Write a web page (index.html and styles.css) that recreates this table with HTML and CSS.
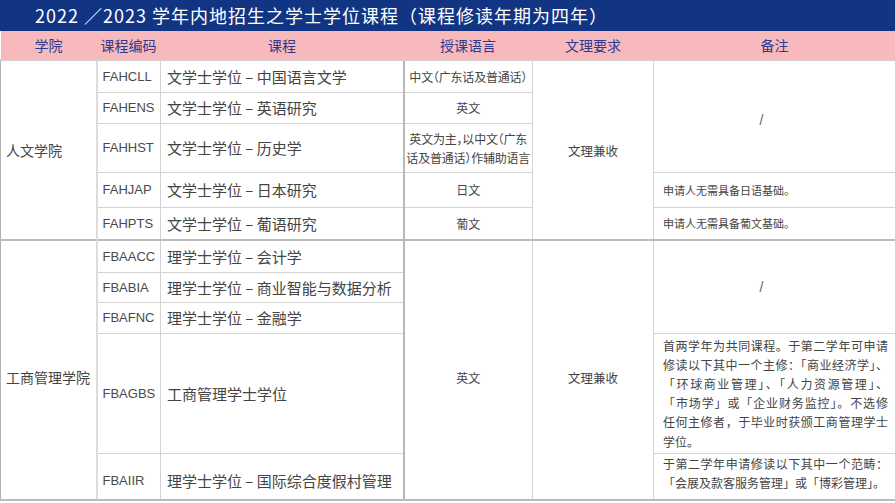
FILE: index.html
```html
<!DOCTYPE html>
<html lang="zh-CN">
<head>
<meta charset="utf-8">
<title>2022／2023 学年内地招生之学士学位课程</title>
<link rel="stylesheet" href="styles.css">
</head>
<body>
<div class="title">2022 ／2023 学年内地招生之学士学位课程（课程修读年期为四年）</div>
<table class="courses">
  <colgroup>
    <col class="c1"><col class="c2"><col class="c3"><col class="c4"><col class="c5"><col class="c6">
  </colgroup>
  <thead>
    <tr><th>学院</th><th>课程编码</th><th>课程</th><th>授课语言</th><th>文理要求</th><th>备注</th></tr>
  </thead>
  <tbody class="fah">
    <tr class="r1">
      <td rowspan="5" class="school">人文学院</td>
      <td class="code">FAHCLL</td>
      <td class="course">文学士学位 – 中国语言文学</td>
      <td class="lang tight">中文（广东话及普通话）</td>
      <td rowspan="5" class="req">文理兼收</td>
      <td rowspan="3" class="note slash first">/</td>
    </tr>
    <tr class="r2">
      <td class="code">FAHENS</td>
      <td class="course">文学士学位 – 英语研究</td>
      <td class="lang">英文</td>
    </tr>
    <tr class="r3">
      <td class="code">FAHHST</td>
      <td class="course">文学士学位 – 历史学</td>
      <td class="lang multi">英文为主，以中文（广东<br>话及普通话）作辅助语言</td>
    </tr>
    <tr class="r4">
      <td class="code">FAHJAP</td>
      <td class="course">文学士学位 – 日本研究</td>
      <td class="lang">日文</td>
      <td class="note short">申请人无需具备日语基础。</td>
    </tr>
    <tr class="r5">
      <td class="code">FAHPTS</td>
      <td class="course">文学士学位 – 葡语研究</td>
      <td class="lang">葡文</td>
      <td class="note short">申请人无需具备葡文基础。</td>
    </tr>
  </tbody>
  <tbody class="fba">
    <tr class="r6">
      <td rowspan="5" class="school low">工商管理学院</td>
      <td class="code">FBAACC</td>
      <td class="course">理学士学位 – 会计学</td>
      <td rowspan="5" class="lang low">英文</td>
      <td rowspan="5" class="req low">文理兼收</td>
      <td rowspan="3" class="note slash">/</td>
    </tr>
    <tr class="r7">
      <td class="code">FBABIA</td>
      <td class="course">理学士学位 – 商业智能与数据分析</td>
    </tr>
    <tr class="r8">
      <td class="code">FBAFNC</td>
      <td class="course">理学士学位 – 金融学</td>
    </tr>
    <tr class="r9">
      <td class="code">FBAGBS</td>
      <td class="course">工商管理学士学位</td>
      <td class="note long">
        <span class="ln">首两学年为共同课程。于第二学年可申请</span>
        <span class="ln">修读以下其中一个主修：「商业经济学」、</span>
        <span class="ln">「环球商业管理」、「人力资源管理」、</span>
        <span class="ln">「市场学」或「企业财务监控」。不选修</span>
        <span class="ln">任何主修者，于毕业时获颁工商管理学士</span>
        <span class="ln end">学位。</span>
      </td>
    </tr>
    <tr class="r10">
      <td class="code">FBAIIR</td>
      <td class="course">理学士学位 – 国际综合度假村管理</td>
      <td class="note long">
        <span class="ln">于第二学年申请修读以下其中一个范畴：</span>
        <span class="ln end">「会展及款客服务管理」或「博彩管理」。</span>
      </td>
    </tr>
  </tbody>
</table>
</body>
</html>
```

FILE: styles.css
```css
html, body {
  margin: 0;
  padding: 0;
  background: #ffffff;
}

body {
  width: 895px;
  height: 503px;
  overflow: hidden;
  font-family: "Noto Sans CJK SC", "Noto Sans", sans-serif;
  color: #444444;
}

.title {
  height: 31px;
  background: #113583;
  color: #ffffff;
  font-size: 18px;
  line-height: 31px;
  padding-left: 35px;
  white-space: nowrap;
  letter-spacing: 1px;
}

.courses {
  border-collapse: collapse;
  table-layout: fixed;
  width: 895px;
}

.c1 { width: 96px; }
.c2 { width: 64px; }
.c3 { width: 243px; }
.c4 { width: 129px; }
.c5 { width: 121px; }
.c6 { width: 242px; }

.courses th {
  background: #f8b9bd;
  color: #2d3b8e;
  font-weight: normal;
  font-size: 14px;
  height: 28px;
  padding: 0;
  border-bottom: 2px solid #cfcfcf;
  line-height: 28px;
}

.courses td {
  border: 1px solid #d4d4d4;
  padding: 0;
  vertical-align: middle;
  white-space: nowrap;
  overflow: hidden;
}

.r1 { height: 32px; }
.r2 { height: 31px; }
.r3 { height: 49px; }
.r4 { height: 35px; }
.r5 { height: 33px; }
.r6 { height: 32px; }
.r7 { height: 30px; }
.r8 { height: 31px; }
.r9 { height: 120px; }
.r10 { height: 47px; }

.fba tr:first-child td {
  border-top: 2px solid #bcbcbc;
}

.fba tr:last-child td,
.fba td[rowspan="5"] {
  border-bottom: 2px solid #bcbcbc;
}

.school {
  font-size: 14px;
  padding-left: 5px !important;
  border-left: 1px solid #b0b0b0 !important;
  border-right: 2px solid #dcdcdc !important;
}

.code {
  font-family: "Liberation Sans", Arial, sans-serif;
  font-size: 13px;
  color: #4a4a4a;
  padding-left: 5px !important;
}

.course {
  font-size: 15px;
  padding-left: 6px !important;
  border-right: 2px solid #b8b8b8 !important;
}

.lang {
  font-size: 12px;
  text-align: center;
}

.lang.tight {
  letter-spacing: -0.2px;
  font-feature-settings: "halt";
}

.lang.multi {
  line-height: 19px;
  font-feature-settings: "halt";
  letter-spacing: -0.2px;
}

.req {
  font-size: 12.5px;
  text-align: center;
}

.low {
  padding-top: 14px !important;
}

.note {
  font-size: 12px;
  padding-left: 9px !important;
}

.note.slash {
  font-family: "Liberation Sans", Arial, sans-serif;
  font-size: 14px;
  color: #666666;
  text-align: center;
  padding-left: 0 !important;
  padding-right: 26px !important;
}

.note.slash.first {
  padding-top: 8px !important;
}

.note.short {
  font-size: 11px;
}

.note.long {
  line-height: 19.2px;
  vertical-align: top;
  padding-top: 2px !important;
  padding-right: 7px !important;
}

.ln {
  display: block;
  text-align: justify;
  text-align-last: justify;
}

.ln.end {
  text-align: left;
  text-align-last: left;
}

.r10 td {
  padding-top: 8px !important;
}

.r10 .note.long {
  padding-top: 0 !important;
}
```
